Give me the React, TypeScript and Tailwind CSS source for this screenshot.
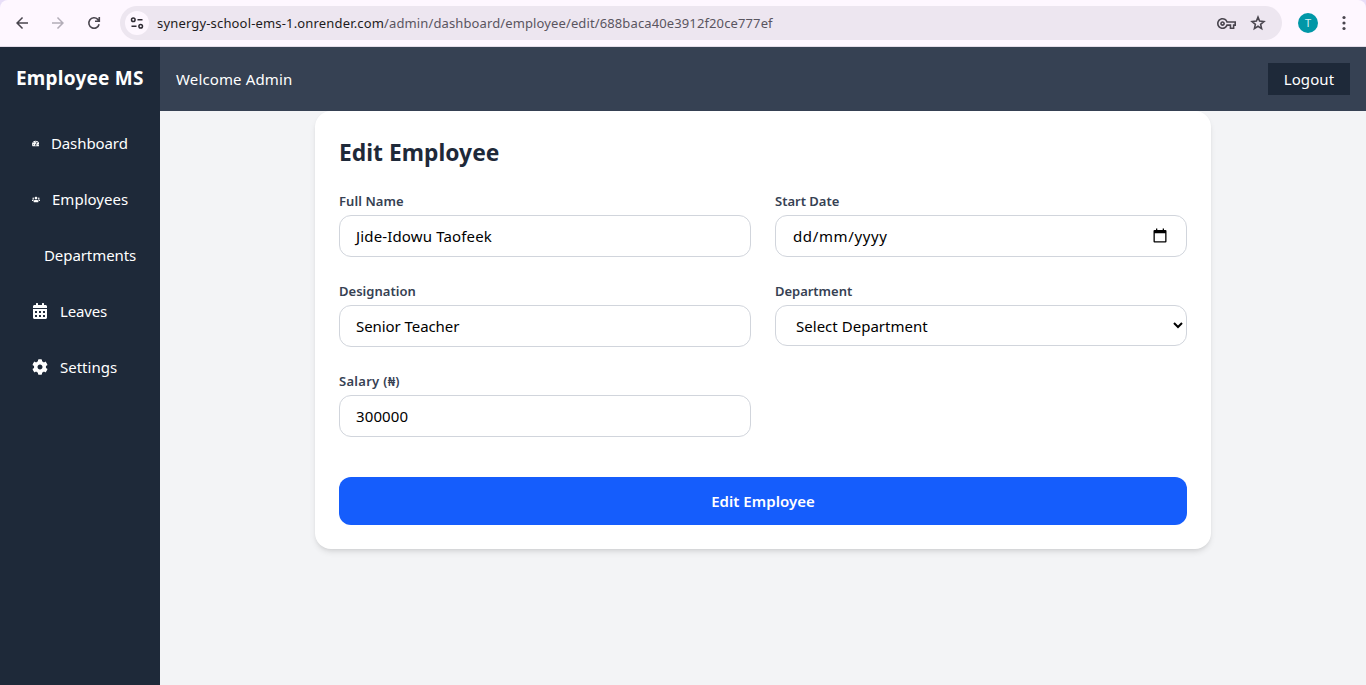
import type { ReactNode } from "react";
import { MdArrowBack, MdArrowForward, MdOutlineVpnKey } from "react-icons/md";
import { FaTachometerAlt, FaUsers, FaCalendarAlt, FaCog } from "react-icons/fa";

function BrowserBar() {
  return (
    <div className="h-[47px] shrink-0 bg-[#e8def8]">
      <div className="flex h-full items-center rounded-t-lg border-b border-[#e3dce8] bg-[#fef7ff] text-[#49454e]">
        <MdArrowBack className="ml-[13px] size-[18px]" />
        <MdArrowForward className="ml-[18px] size-[18px] text-[#b3adb8]" />
        <svg viewBox="0 0 18 18" className="ml-[18px] size-[18px]" fill="none" stroke="currentColor" strokeWidth="1.6">
          <path d="M14.1 10.2A5.2 5.2 0 1 1 12.8 5.4L14.2 7M14.3 3V7.3H10" />
        </svg>
        <div className="ml-[17px] flex h-[34px] w-[1162px] items-center rounded-full bg-[#ede6f0] pl-[5px] pr-[15px]">
          <div className="flex size-6 items-center justify-center rounded-full bg-[#fef7ff]">
            <svg viewBox="0 0 14 12" className="h-3 w-3.5" fill="none" stroke="#2f2b33" strokeWidth="1.5">
              <circle cx="3.3" cy="2.8" r="1.8" />
              <path d="M7.5 2.8H12.5M1.5 9.2H6.5" />
              <circle cx="10.7" cy="9.2" r="1.8" />
            </svg>
          </div>
          <div className="ml-2 flex grow text-[13px] leading-5 whitespace-pre">
            <span className="tracking-[0.165px] text-[#1d1b20]">synergy-school-ems-1.onrender.com</span>
            <span className="tracking-[0.12px] text-[#5a555f]">/admin/dashboard/employee/edit/688baca40e3912f20ce777ef</span>
          </div>
          <MdOutlineVpnKey className="size-[19px]" />
          <svg viewBox="0 0 24 24" className="ml-[13.5px] size-[18px]" fill="none" stroke="currentColor" strokeWidth="2.1">
            <path d="M12 4.2L14.1 9.5L19.9 10L15.5 13.8L16.8 19.4L12 16.4L7.2 19.4L8.5 13.8L4.1 10L9.9 9.5Z" />
          </svg>
        </div>
        <div className="ml-4 flex size-5 items-center justify-center rounded-full bg-[#0097a7] font-['Roboto',sans-serif] text-[11px] leading-none text-[#d5f0f3]">
          T
        </div>
        <svg viewBox="0 0 4 16" className="ml-6 h-4 w-1" fill="#49454e">
          <circle cx="2" cy="2.5" r="1.6" />
          <circle cx="2" cy="8" r="1.6" />
          <circle cx="2" cy="13.5" r="1.6" />
        </svg>
      </div>
    </div>
  );
}

function NavItem({ icon, children, className }: { icon?: ReactNode; children: ReactNode; className: string }) {
  return (
    <a className={`flex h-10 items-center pl-4 text-[15px] leading-6 whitespace-nowrap text-white ${className}`}>
      {icon}
      <span className="pb-px">{children}</span>
    </a>
  );
}

function Sidebar() {
  return (
    <aside className="w-40 shrink-0 bg-[#1e2939]">
      <h1 className="flex h-16 items-center pl-4 pb-0.5 text-[19px] font-bold whitespace-nowrap tracking-[0.22px] text-white">Employee MS</h1>
      <nav className="flex flex-col gap-4 px-4 pt-3">
        <NavItem className="gap-[11.5px] tracking-[-0.08px]" icon={<FaTachometerAlt className="w-[7.4px] shrink-0" />}>Dashboard</NavItem>
        <NavItem className="gap-3 tracking-[0.02px]" icon={<FaUsers className="w-2 shrink-0" />}>Employees</NavItem>
        <NavItem className="gap-3 tracking-[-0.08px]" icon={<span className="w-0" />}>Departments</NavItem>
        <NavItem className="gap-3 tracking-[-0.18px]" icon={<FaCalendarAlt className="size-4 shrink-0" />}>Leaves</NavItem>
        <NavItem className="gap-3 tracking-[0px]" icon={<FaCog className="size-4 shrink-0" />}>Settings</NavItem>
      </nav>
    </aside>
  );
}

function Field({ label, children, labelClass }: { label: string; children: ReactNode; labelClass: string }) {
  return (
    <div className="h-[66px]">
      <label className={`block h-5 text-[13px] leading-5 font-semibold text-[#364153] ${labelClass}`}>{label}</label>
      <div className="mt-1">{children}</div>
    </div>
  );
}

export default function App() {
  return (
    <div className="flex h-[685px] w-full flex-col overflow-hidden bg-[#f3f4f6] font-['Noto_Sans','Open_Sans',sans-serif]">
      <BrowserBar />
      <div className="flex min-h-0 grow">
        <Sidebar />
        <main className="flex min-w-0 grow flex-col">
          <header className="flex h-16 shrink-0 items-center justify-between bg-[#364153] px-4 text-[15px] leading-6 text-white">
            <p className="tracking-[0.14px]">Welcome Admin</p>
            <button className="h-8 w-[82px] bg-[#1e2939] text-center tracking-[0.1px]">Logout</button>
          </header>
          <section className="mx-auto h-[438px] w-[896px] rounded-2xl bg-white p-6 shadow-md">
            <h2 className="h-9 text-[22.8px] leading-9 font-bold tracking-[0.03px] text-[#1e2939]">Edit Employee</h2>
            <form className="mt-5">
              <div className="grid grid-cols-2 gap-6">
                <Field label="Full Name" labelClass="tracking-[0.08px]">
                  <input defaultValue="Jide-Idowu Taofeek" className="block h-[42px] w-full rounded-xl border border-[#d1d5dc] px-3 indent-1 text-[15px] tracking-[0.15px] text-black" />
                </Field>
                <Field label="Start Date" labelClass="tracking-[0px]">
                  <div className="flex h-[42px] w-full items-center justify-between rounded-xl border border-[#d1d5dc] pr-[19px] pl-[17px] text-[15px] tracking-[0.64px] text-black">
                    <span>dd/mm/yyyy</span>
                    <svg viewBox="0 0 14 15" className="mb-0.5 h-[15px] w-3.5">
                      <path d="M3 .5h1.3V2h5.4V.5H11V2h1.5a1 1 0 0 1 1 1v10.5a1 1 0 0 1-1 1h-11a1 1 0 0 1-1-1V3a1 1 0 0 1 1-1H3zM1.8 5.2v8h10.4v-8z" fill="#000" fillRule="evenodd" />
                    </svg>
                  </div>
                </Field>
                <Field label="Designation" labelClass="tracking-[0.02px]">
                  <input defaultValue="Senior Teacher" className="block h-[42px] w-full rounded-xl border border-[#d1d5dc] px-4 text-[15px] tracking-[-0.07px] text-black" />
                </Field>
                <Field label="Department" labelClass="tracking-[-0.03px]">
                  <select className="block h-[41px] w-full rounded-xl border border-[#d1d5dc] bg-white px-4 text-[15px] tracking-[0.02px] text-black">
                    <option>Select Department</option>
                  </select>
                </Field>
                <Field label="Salary (₦)" labelClass="tracking-[0.28px]">
                  <input defaultValue="300000" className="block h-[42px] w-full rounded-xl border border-[#d1d5dc] px-4 text-[15px] tracking-[0.12px] text-black" />
                </Field>
              </div>
              <button type="button" className="mt-10 h-12 w-full rounded-xl bg-[#155dfc] text-[15px] font-semibold tracking-[0.04px] text-white">
                Edit Employee
              </button>
            </form>
          </section>
        </main>
      </div>
    </div>
  );
}
